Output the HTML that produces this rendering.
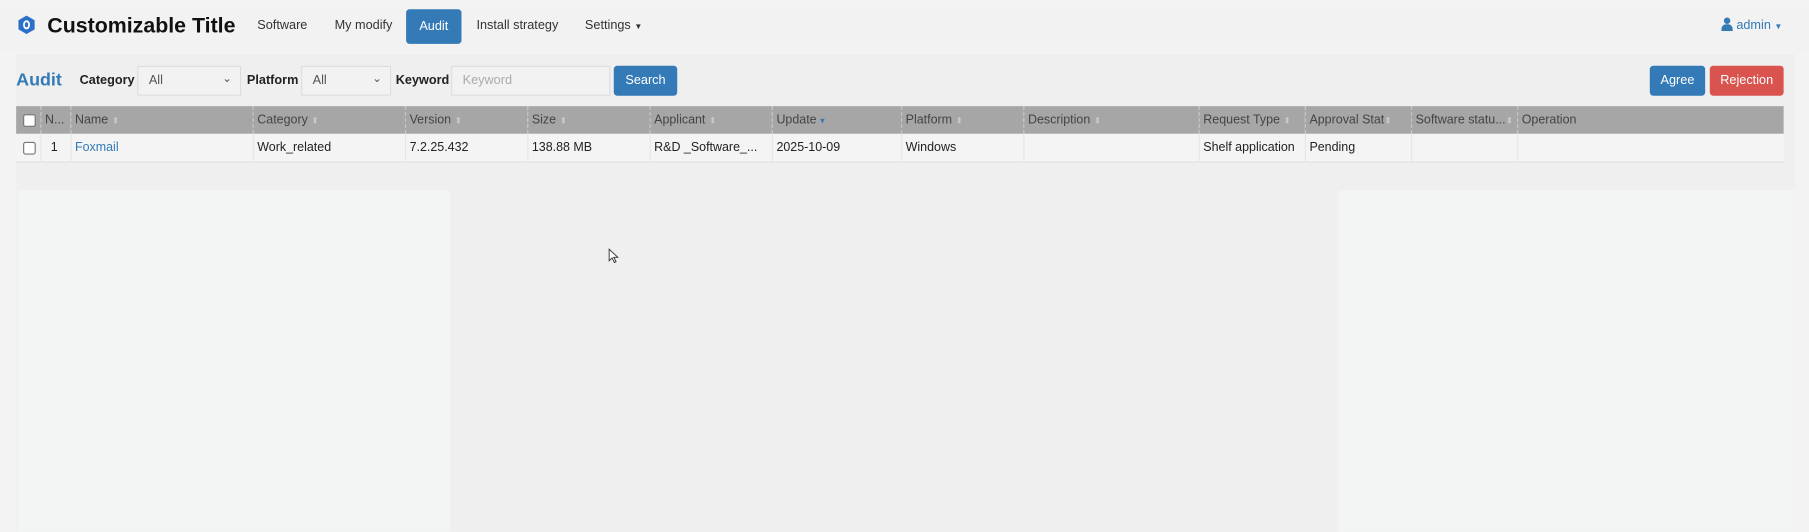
<!DOCTYPE html>
<html><head><meta charset="utf-8"><style>
*{box-sizing:border-box;margin:0;padding:0}
html,body{width:1809px;height:532px;overflow:hidden;background:#f3f3f3}
#w{position:absolute;left:0;top:0;width:1568px;height:461px;transform:scale(1.15370);transform-origin:0 0;font-family:"Liberation Sans",Arial,sans-serif;font-size:11px;color:#222}
.a{position:absolute}
.nav{left:0;top:4px;width:1568px;height:41px;background:#f2f2f2}
.panel{left:14px;top:47px;width:1542px;height:414px;background:#efefef}
.lt{background:#f3f4f4}
.btn{position:absolute;color:#fff;border-radius:3px;text-align:center;font-size:11px}
.sel{position:absolute;height:26px;border:1px solid #ddd;background:#f2f2f2;color:#555;padding:6px 9px;top:57px}
.sel i{position:absolute;right:7px;top:5px;font-style:normal;font-size:10px;color:#555}
.th{position:absolute;top:92px;height:24px;background:#a6a6a6;color:#444;font-size:10.8px;line-height:24px;border-left:1px dashed #c8c8c8;padding-left:3px;white-space:nowrap;overflow:hidden}
.td{position:absolute;top:116px;height:25px;background:#f4f4f4;line-height:25px;font-size:10.8px;border-left:1px solid #e6e6e6;border-bottom:1px solid #e0e0e0;padding-left:3px;white-space:nowrap;overflow:hidden}
.s{color:#c9c9c9;font-size:8px}
.cb{display:inline-block;width:11px;height:11px;border:1px solid #777;border-radius:2px;background:#fff;vertical-align:middle}
</style></head><body><div id="w">
<div class="a nav"></div>
<svg class="a" style="left:15px;top:13px" width="16" height="17" viewBox="0 0 16 17"><path d="M8 0.5L15 4.5V12.5L8 16.5L1 12.5V4.5Z" fill="#2a6fc9"/><ellipse cx="8" cy="8.5" rx="3" ry="4" fill="#fff"/><ellipse cx="8" cy="8.5" rx="1.5" ry="2.3" fill="#2a6fc9"/></svg>
<div class="a" style="left:41px;top:11px;font-size:18.5px;font-weight:bold;color:#111">Customizable Title</div>
<div class="a" style="left:223px;top:16px;color:#333">Software</div>
<div class="a" style="left:290px;top:16px;color:#333">My modify</div>
<div class="btn" style="left:352px;top:8px;width:48px;height:30px;line-height:30px;background:#337ab7">Audit</div>
<div class="a" style="left:413px;top:16px;color:#333">Install strategy</div>
<div class="a" style="left:507px;top:16px;color:#333">Settings <span style="font-size:7px">▼</span></div>
<svg class="a" style="left:1492px;top:15px" width="10" height="12" viewBox="0 0 10 12"><circle cx="5" cy="3" r="2.8" fill="#337ab7"/><path d="M0 12C0 7 2 6 5 6S10 7 10 12Z" fill="#337ab7"/></svg>
<div class="a" style="left:1505px;top:16px;color:#337ab7">admin <span style="font-size:7px">▼</span></div>
<div class="a panel"></div>
<div class="a lt" style="left:16px;top:165px;width:374px;height:296px"></div>
<div class="a lt" style="left:1160px;top:165px;width:396px;height:296px"></div>
<div class="a" style="left:14px;top:61px;font-size:15.5px;font-weight:bold;color:#337ab7">Audit</div>
<div class="a" style="left:69px;top:64px;font-weight:bold">Category</div>
<div class="sel" style="left:119px;width:90px">All<i>⌄</i></div>
<div class="a" style="left:214px;top:64px;font-weight:bold">Platform</div>
<div class="sel" style="left:261px;width:78px">All<i>⌄</i></div>
<div class="a" style="left:343px;top:64px;font-weight:bold">Keyword</div>
<div class="sel" style="left:391px;width:138px;color:#aaa">Keyword</div>
<div class="btn" style="left:532px;top:57px;width:55px;height:26px;line-height:26px;background:#337ab7">Search</div>
<div class="btn" style="left:1430px;top:57px;width:48px;height:26px;line-height:26px;background:#337ab7">Agree</div>
<div class="btn" style="left:1482px;top:57px;width:64px;height:26px;line-height:26px;background:#d9534f">Rejection</div>
<div class="th" style="left:14px;width:21px;padding-left:6px;border:0"><span class="cb"></span></div>
<div class="th" style="left:35px;width:26px">N...</div>
<div class="th" style="left:61px;width:158px">Name <span class="s">⬍</span></div>
<div class="th" style="left:219px;width:132px">Category <span class="s">⬍</span></div>
<div class="th" style="left:351px;width:106px">Version <span class="s">⬍</span></div>
<div class="th" style="left:457px;width:106px">Size <span class="s">⬍</span></div>
<div class="th" style="left:563px;width:106px">Applicant <span class="s">⬍</span></div>
<div class="th" style="left:669px;width:112px">Update <span class="s" style="color:#337ab7">▾</span></div>
<div class="th" style="left:781px;width:106px">Platform <span class="s">⬍</span></div>
<div class="th" style="left:887px;width:152px">Description <span class="s">⬍</span></div>
<div class="th" style="left:1039px;width:92px">Request Type <span class="s">⬍</span></div>
<div class="th" style="left:1131px;width:92px">Approval Stat<span class="s">⬍</span></div>
<div class="th" style="left:1223px;width:92px">Software statu...<span class="s">⬍</span></div>
<div class="th" style="left:1315px;width:231px">Operation</div>
<div class="td" style="left:14px;width:21px;padding-left:6px;border-left:0"><span class="cb"></span></div>
<div class="td" style="left:35px;width:26px;padding-left:8px">1</div>
<div class="td" style="left:61px;width:158px;color:#337ab7">Foxmail</div>
<div class="td" style="left:219px;width:132px">Work_related</div>
<div class="td" style="left:351px;width:106px">7.2.25.432</div>
<div class="td" style="left:457px;width:106px">138.88 MB</div>
<div class="td" style="left:563px;width:106px">R&amp;D _Software_...</div>
<div class="td" style="left:669px;width:112px">2025-10-09</div>
<div class="td" style="left:781px;width:106px">Windows</div>
<div class="td" style="left:887px;width:152px"></div>
<div class="td" style="left:1039px;width:92px">Shelf application</div>
<div class="td" style="left:1131px;width:92px">Pending</div>
<div class="td" style="left:1223px;width:92px"></div>
<div class="td" style="left:1315px;width:231px"></div>
<svg class="a" style="left:527px;top:215px" width="10" height="14" viewBox="0 0 10 14"><path d="M1 1V11L3.5 8.5L5.5 12.5L7 11.8L5 8H8.5Z" fill="#fff" stroke="#333" stroke-width="0.8"/></svg>
</div></body></html>
